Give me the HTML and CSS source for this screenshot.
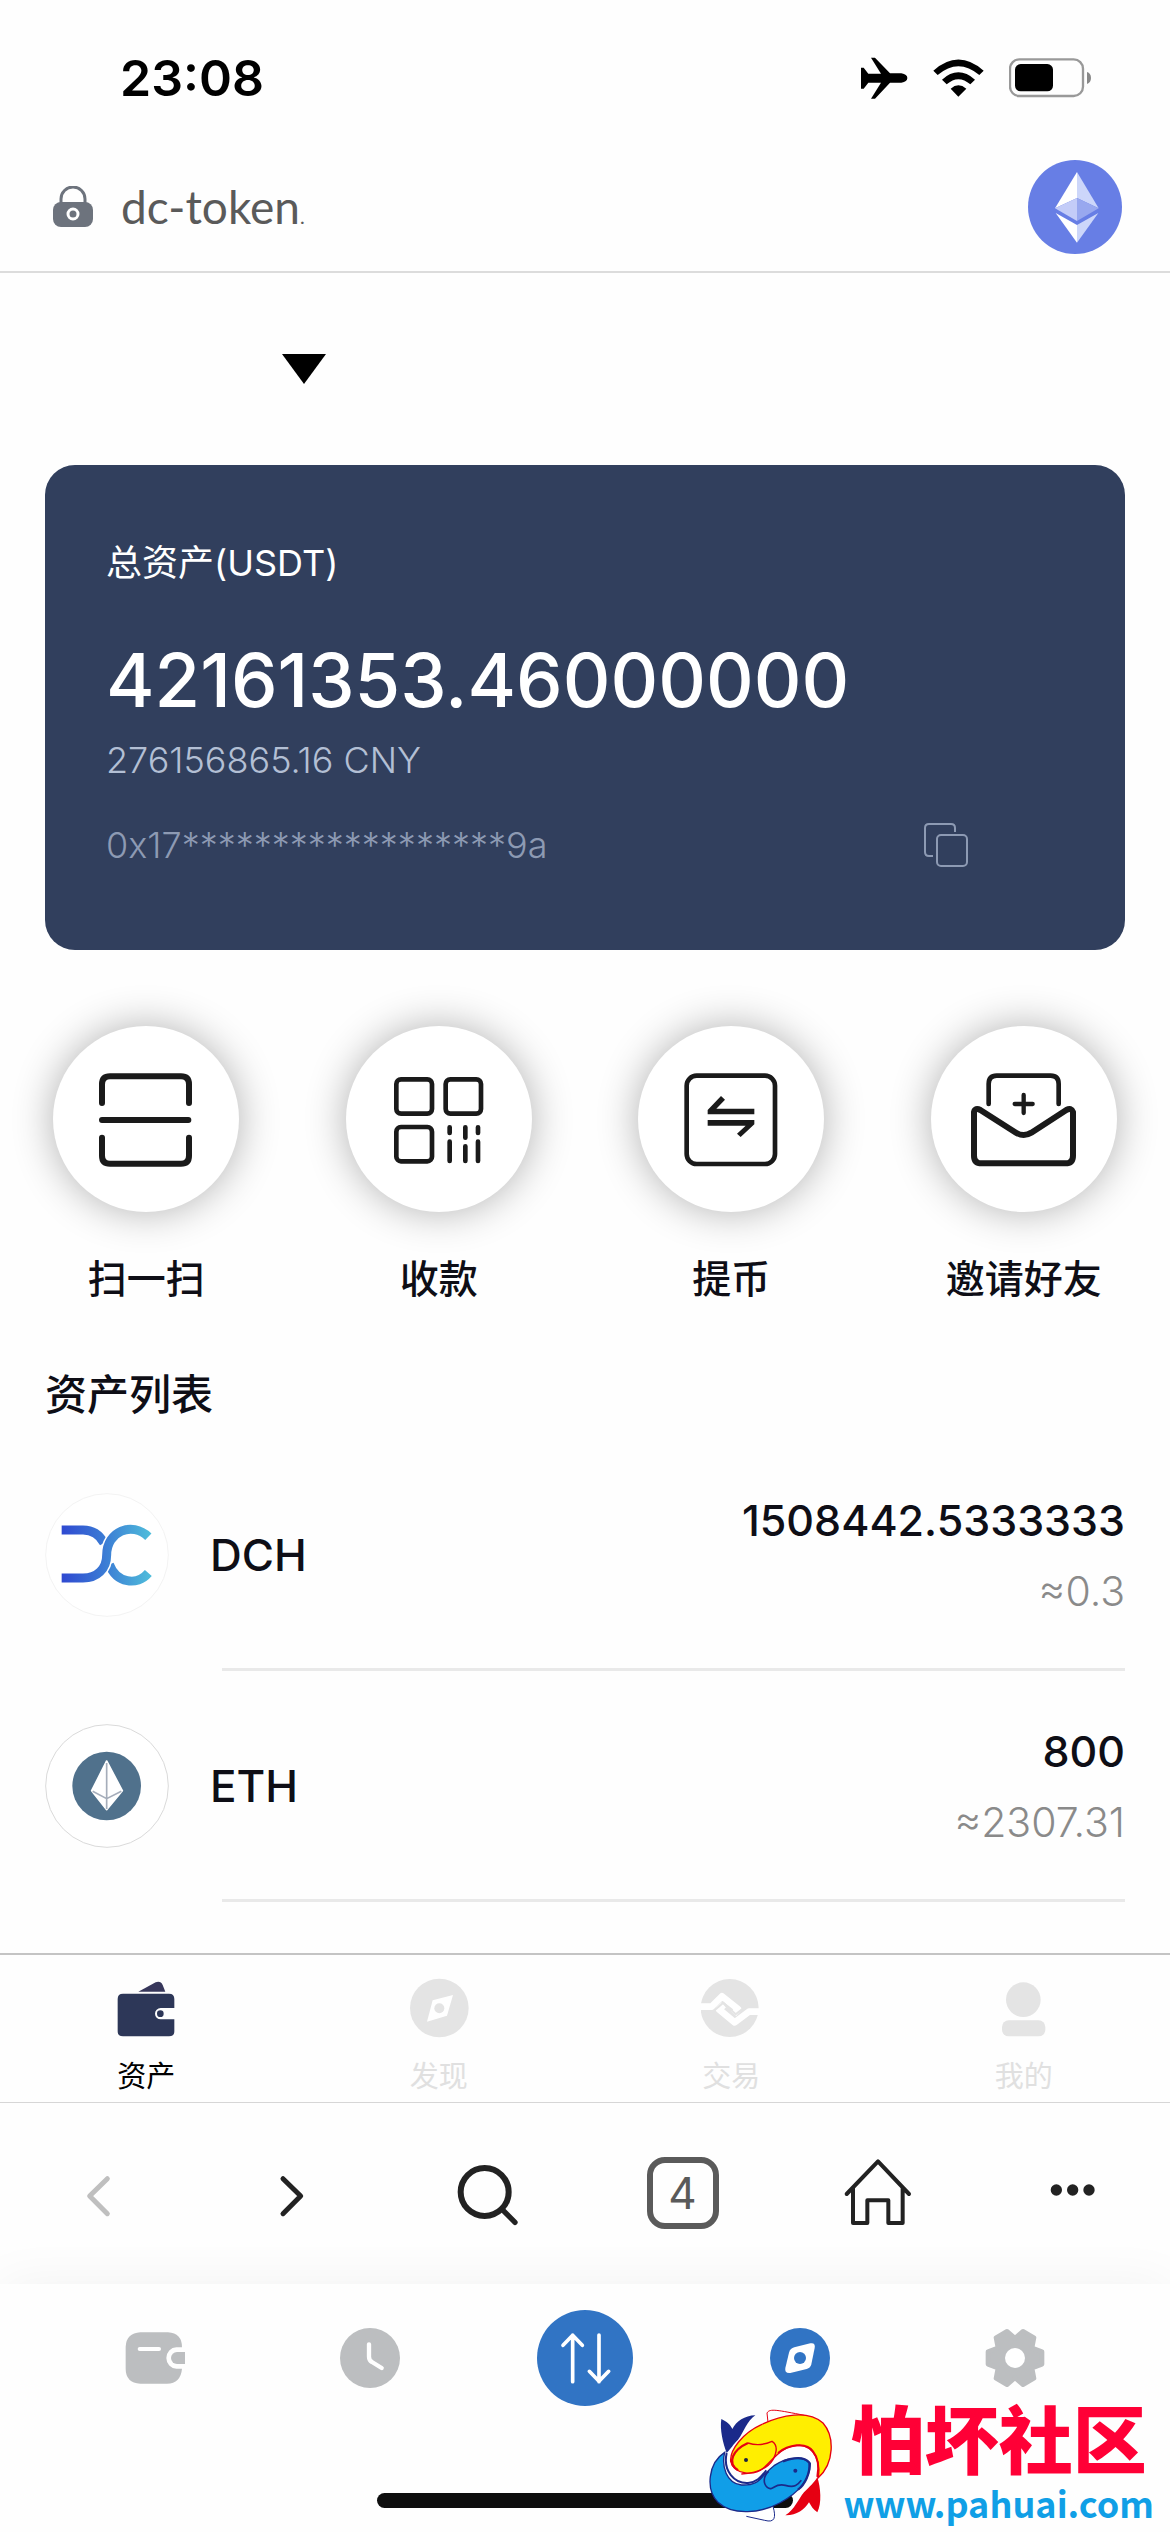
FILE: index.html
```html
<!DOCTYPE html>
<html lang="zh-CN">
<head>
<meta charset="utf-8">
<meta name="viewport" content="width=device-width, initial-scale=1">
<title>dc-token</title>
<link rel="stylesheet" href="styles.css">
</head>
<body>
<div class="phone">
  <div class="status">
    <span class="status-time">23:08</span>
    <div class="status-icons">
      <svg class="i-plane" viewBox="62 82 141 126" aria-hidden="true"><path d="M62 114h8l14 18h38L92 84h12l45 47h34q18 3 18 14t-18 14h-34l-45 48H92l30-48H84l-14 18h-8z"/></svg>
      <svg class="i-wifi" viewBox="279 85 153 114" aria-hidden="true"><path d="M280 120Q355 53 431 120L418 133Q355 80 293 133zM306 147Q355 103 405 147L391 161Q355 130 320 161zM332 174Q355 154 379 174L355 198z"/></svg>
      <svg class="i-battery" viewBox="507 83 249 120" aria-hidden="true"><rect x="510" y="87" width="219" height="110" rx="28" fill="none" stroke="#999" stroke-width="7"/><rect x="525" y="101" width="114" height="82" rx="17"/><path d="M741 125q12 4 12 18t-12 18z" fill="#888"/></svg>
    </div>
  </div>

  <header class="address">
    <svg class="i-lock" viewBox="0 0 40 42" aria-hidden="true"><path d="M8 17V13a12 12 0 0 1 24 0v4" fill="none" stroke="#6d737d" stroke-width="3"/><rect y="16" width="40" height="25" rx="8" fill="#6d737d"/><circle cx="20" cy="28" r="5" fill="none" stroke="#fff" stroke-width="3"/></svg>
    <span class="site">dc-token<small>.</small></span>
    <button class="network" aria-label="Ethereum">
      <svg viewBox="564 390 282 282" aria-hidden="true"><circle cx="705" cy="531" r="141" fill="#677ee5"/><path d="M711 426L645 535L711 504z" fill="#fff"/><path d="M711 426L776 535L711 504z" fill="#ccd6fa"/><path d="M645 535L711 504V573z" fill="#c3ccf8"/><path d="M776 535L711 504V573z" fill="#98a8ef"/><path d="M647 549L711 585V638z" fill="#fff"/><path d="M775 549L711 585V638z" fill="#ccd6fa"/></svg>
    </button>
  </header>

  <main>
    <div class="picker">
      <button aria-label="选择钱包"><svg viewBox="0 0 44 30" aria-hidden="true"><path d="M0 0H44L22 30z"/></svg></button>
    </div>

    <section class="card">
      <h2 class="card-label">总资产(USDT)</h2>
      <p class="card-total">42161353.46000000</p>
      <p class="card-fiat">276156865.16 CNY</p>
      <div class="card-address">
        <span>0x17******************9a</span>
        <button aria-label="复制"><svg viewBox="0 0 44 44" fill="none" stroke="#8d9ab3" stroke-width="2" aria-hidden="true"><path d="M9 33H5q-4 0-4-4V5q0-4 4-4h22q4 0 4 4v4"/><rect x="13" y="12" width="30" height="31" rx="4"/></svg></button>
      </div>
    </section>

    <div class="actions">
      <button><span class="disc"><svg viewBox="153 162 330 330" stroke-width="18" aria-hidden="true"><path d="M186 279V223Q186 199 210 199H423Q447 199 447 223V279M186 330H445M186 383V437Q186 461 210 461H423Q447 461 447 437V383"/></svg></span>扫一扫</button>
      <button><span class="disc"><svg viewBox="1033 162 330 330" stroke-width="14" aria-hidden="true"><rect x="1070" y="208" width="107" height="103" rx="14"/><rect x="1218" y="208" width="106" height="103" rx="14"/><rect x="1070" y="351" width="107" height="103" rx="14"/><path d="M1230 352V369M1277 352V383M1315 352V369M1230 395V453M1277 409V453M1315 395V453"/></svg></span>收款</button>
      <button><span class="disc"><svg viewBox="167 162 330 330" stroke-width="14" aria-hidden="true"><rect x="199" y="197" width="265" height="265" rx="30"/><path stroke="none" fill="#1a1a1a" d="M402 296V313H262V300L302 258L314 269L288 296zM262 330H402V343L361 381L350 371L376 347H262z"/></svg></span>提币</button>
      <button><span class="disc"><svg viewBox="1047 162 330 330" stroke-width="18" aria-hidden="true"><path stroke-width="14" d="M1106 282V222Q1106 197 1130 197H1292Q1316 197 1316 222V282"/><path stroke-width="13" d="M1184 282H1238M1211 255V309"/><path d="M1062 306Q1066 292 1081 300L1188 368Q1211 382 1234 368L1339 300Q1354 292 1359 306V437Q1359 460 1336 460H1085Q1062 460 1062 437z"/></svg></span>邀请好友</button>
    </div>

    <section class="assets">
      <h2>资产列表</h2>
      <ul>
        <li>
          <div class="asset">
            <svg class="coin" viewBox="44 40 372 372" aria-hidden="true">
              <defs><linearGradient id="dch" gradientUnits="userSpaceOnUse" x1="94" y1="230" x2="362" y2="230"><stop offset="0" stop-color="#2f49d1"/><stop offset=".45" stop-color="#3a78d4"/><stop offset="1" stop-color="#4fbddb"/></linearGradient></defs>
              <circle cx="230" cy="226" r="184" fill="#fff" stroke="#f3f3f3" stroke-width="3"/>
              <g fill="none" stroke="url(#dch)" stroke-width="27"><path d="M94 151H158Q200 151 221 190"/><path d="M237 254C258 310 320 320 354 280"/><path d="M94 295H158C200 295 229 268 229 226C229 155 305 124 354 171" stroke="#fff" stroke-width="36"/><path d="M94 295H158C200 295 229 268 229 226C229 155 305 124 354 171"/></g>
            </svg>
            <span class="asset-name">DCH</span>
            <div class="asset-value"><strong>1508442.5333333</strong><span>≈0.3</span></div>
          </div>
        </li>
        <li>
          <div class="asset">
            <svg class="coin" viewBox="44 733 372 372" aria-hidden="true"><circle cx="230" cy="919" r="184" fill="#fff" stroke="#dadada" stroke-width="3"/><circle cx="229" cy="919" r="103" fill="#50718c"/><path d="M229 844L276 933L229 990L184 933z" fill="#fff" stroke="#fff" stroke-width="5" stroke-linejoin="round"/><path d="M229 850V988M187 935L229 957L273 935" fill="none" stroke="#a5adba" stroke-width="5"/></svg>
            <span class="asset-name">ETH</span>
            <div class="asset-value"><strong>800</strong><span>≈2307.31</span></div>
          </div>
        </li>
      </ul>
    </section>
  </main>

  <nav class="tabs" aria-label="应用">
    <a href="#" class="current"><svg viewBox="106 25 180 180" aria-hidden="true"><path d="M173 66L225 38Q240 33 246 46L254 66z" fill="#37375b"/><path d="M127 72H265Q281 72 281 88V115H240a17 17 0 0 0 0 34H281V185Q281 200 265 200H127Q111 200 111 185V88Q111 72 127 72z" fill="#2d3758"/><circle cx="239" cy="132" r="10" fill="#2d3758"/></svg>资产</a>
    <a href="#"><svg viewBox="986 25 180 180" aria-hidden="true"><circle cx="1077" cy="115" r="88" fill="#e4e4e4"/><path d="M1118 76L1100 138L1040 156L1057 92z" fill="#fff"/><circle cx="1077" cy="116" r="15" fill="#e4e4e4"/></svg>发现</a>
    <a href="#"><svg viewBox="334 25 180 180" aria-hidden="true"><circle cx="420" cy="115" r="87" fill="#e4e4e4"/><g fill="none" stroke-linejoin="round"><path d="M330 111H366L397 80L445 118L432 132M512 126H478L435 158L388 119L402 106" stroke="#fff" stroke-width="20"/><path d="M372 124L401 99L438 134L458 118" stroke="#e4e4e4" stroke-width="6"/></g></svg>交易</a>
    <a href="#"><svg viewBox="1211 25 180 180" aria-hidden="true"><circle cx="1299" cy="90" r="52" fill="#e4e4e4"/><rect x="1235" y="152" width="130" height="48" rx="20" fill="#e4e4e4"/></svg>我的</a>
  </nav>

  <div class="toolbar">
    <button aria-label="后退" disabled><svg viewBox="-56 561 216 216" aria-hidden="true"><path d="M80 626L27 678L80 731" stroke="#bfbfbf" stroke-width="15"/></svg></button>
    <button aria-label="前进"><svg viewBox="529 561 216 216" aria-hidden="true"><path d="M607 626L660 678L607 731" stroke-width="15"/></svg></button>
    <button aria-label="搜索"><svg viewBox="1114 561 216 216" aria-hidden="true"><circle cx="1212" cy="666" r="72" stroke-width="18"/><path d="M1268 722L1303 757" stroke-width="16"/></svg></button>
    <button aria-label="标签页"><span class="tab-count">4</span></button>
    <button aria-label="主页"><svg viewBox="754 561 216 216" stroke-width="12" aria-hidden="true"><path d="M768 672L862 574L955 672M787 655V759H830V691H893V759H936V655"/></svg></button>
    <button aria-label="更多"><svg viewBox="1339 561 216 216" aria-hidden="true"><g fill="#222" stroke="none"><circle cx="1397" cy="660" r="17"/><circle cx="1446" cy="660" r="17"/><circle cx="1495" cy="660" r="17"/></g></svg></button>
  </div>

  <nav class="dock" aria-label="钱包">
    <a href="#" aria-label="钱包"><svg viewBox="136 1074 180 180" aria-hidden="true"><path d="M182 1087H265Q307 1090 307 1132H290a30 32 0 0 0 0 64H307Q303 1240 262 1241H182Q138 1238 138 1196V1130Q140 1090 182 1087z" fill="#bcbec0"/><path d="M180 1137H238" stroke="#fff" stroke-width="12" stroke-linecap="round"/><path d="M292 1146H316V1182H292a18 18 0 0 1 0-36z" fill="#bcbec0"/></svg></a>
    <a href="#" aria-label="记录"><svg viewBox="780 1074 180 180" aria-hidden="true"><circle cx="870" cy="1164" r="90" fill="#bcbec0"/><path d="M867 1123V1160Q867 1171 876 1176L905 1194" fill="none" stroke="#fff" stroke-width="13" stroke-linecap="round"/></svg></a>
    <a href="#" aria-label="兑换"><svg class="swap" viewBox="1371 1020 288 288" aria-hidden="true"><circle cx="1515" cy="1164" r="144" fill="#3174c4"/><path d="M1478 1235V1095M1449 1126L1478 1096L1507 1126M1557 1095V1235M1528 1204L1557 1234L1586 1204" fill="none" stroke="#fff" stroke-width="11" stroke-linecap="round" stroke-linejoin="round"/></svg></a>
    <a href="#" aria-label="浏览器"><svg viewBox="537 1074 180 180" aria-hidden="true"><circle cx="627" cy="1164" r="90" fill="#3174c4"/><path d="M610 1132L658 1120Q674 1117 671 1134L661 1183Q658 1194 647 1197L598 1209Q580 1211 583 1194L594 1148Q598 1135 610 1132z" fill="#fff"/><circle cx="627" cy="1164" r="18" fill="#3174c4"/></svg></a>
    <a href="#" aria-label="设置"><svg viewBox="-90 -90 180 180" aria-hidden="true"><path d="M81-19V19L51 30L57 61L24 80L0 59L-24 80L-57 61L-51 30L-81 19V-19L-51-30L-57-61L-24-80L0-59L24-80L57-61L51-30z" fill="#bcbec0" stroke="#bcbec0" stroke-width="14" stroke-linejoin="round"/><circle r="30" fill="#fff"/></svg></a>
  </nav>
  <div class="home-bar"></div>

  <div class="watermark">
    <svg viewBox="30 42 375 348" fill="none" stroke-width="4" aria-hidden="true">
      <path d="M210 88L207 60C215 45 240 52 320 67" fill="#fff" stroke="#e60012" stroke-width="3"/>
      <path d="M225 340C235 375 230 390 200 382L145 370" fill="#fff" stroke="#1b2a8a" stroke-width="3"/>
      <path d="M80 178C30 210 22 290 60 328C105 370 190 360 245 330C300 300 335 260 337 212C315 185 262 195 228 218C185 250 190 278 130 276C85 270 70 220 80 178z" fill="#109ee8" stroke="#1b2a8a"/>
      <path d="M70 78C85 85 98 95 103 108C115 85 140 68 172 67C145 85 140 115 120 140C105 155 100 165 86 180C75 150 65 110 70 78z" fill="#1b2a8a"/>
      <path d="M86 180C74 235 110 272 150 270C178 268 190 250 205 232" stroke="#1b2a8a" stroke-width="6"/>
      <path d="M212 235C195 250 195 272 208 283C225 297 228 268 262 277C290 286 300 275 310 262" stroke="#1b2a8a" stroke-width="5"/>
      <path d="M255 205C290 192 318 190 334 209C338 240 320 275 300 290" stroke="#1b2a8a" stroke-width="7"/>
      <path d="M360 255C410 210 410 130 375 90C330 50 250 65 190 95C135 120 95 170 98 205C105 240 165 255 200 222C235 190 250 160 305 157C350 160 370 210 360 255z" fill="#ffee00" stroke="#e60012"/>
      <path d="M358 252C368 285 372 330 358 358C345 350 340 340 333 328C320 350 295 368 262 367C290 350 300 320 318 298C335 280 350 268 358 252z" fill="#e60012"/>
      <path d="M150 150C175 158 200 155 222 145C238 155 238 175 225 200C210 225 180 240 130 243" stroke="#e60012"/>
      <path d="M150 150C105 170 85 210 120 232" stroke="#e60012" stroke-width="7"/>
      <path d="M240 180C270 155 325 145 345 175C365 200 362 230 358 252" stroke="#e60012" stroke-width="6"/>
      <circle cx="144" cy="201" r="6" fill="#1c2340"/><circle cx="292" cy="233" r="6" fill="#1b2a8a"/>
    </svg>
    <div class="watermark-text"><b>怕坏社区</b><span>www.pahuai.com</span></div>
  </div>
</div>
</body>
</html>
```
FILE: styles.css
```css
* { box-sizing: border-box; }

body {
  margin: 0;
  background: #fefefe;
  color: #0e0e16;
  font-family: Inter, "Noto Sans CJK SC", sans-serif;
}

h2, p, ul { margin: 0; padding: 0; }
ul { list-style: none; }
svg { display: block; }
button { padding: 0; border: 0; background: none; color: inherit; font: inherit; }
a { color: inherit; text-decoration: none; }

.phone {
  position: relative;
  display: flex;
  flex-direction: column;
  min-height: 100vh;
}

/* status bar */
.status {
  display: flex;
  align-items: center;
  justify-content: space-between;
  padding: 46px 78px 30px 120px;
  color: #000;
}
.status-time { font-size: 50px; line-height: 64px; font-weight: 600; }
.status-icons { display: flex; align-items: center; gap: 25px; }
.i-plane { width: 47px; height: 42px; }
.i-wifi { width: 51px; height: 38px; }
.i-battery { width: 83px; height: 40px; }

/* address bar */
.address {
  display: flex;
  align-items: center;
  padding: 20px 48px 17px 53px;
  border-bottom: 2px solid #dcdcdc;
}
.i-lock { width: 40px; height: 42px; }
.site {
  flex: 1;
  margin-left: 28px;
  padding-top: 8px;
  color: #5a5a5a;
  font-family: Lato, sans-serif;
  font-size: 46px;
  line-height: 56px;
}
.site small { font-size: 20px; }
.network svg { width: 94px; height: 94px; }

.picker { display: flex; padding: 81px 282px; }
.picker svg { width: 44px; height: 30px; }

/* balance card */
.card {
  margin: 0 45px;
  padding: 76px 61px 83px;
  border-radius: 30px;
  background: #313f5d;
  color: #fff;
}
.card-label { font-size: 36px; line-height: 44px; font-weight: 400; }
.card-total { margin-top: 47px; font-size: 74px; line-height: 96px; font-weight: 500; }
.card-fiat { margin-top: 10px; color: #b3bfd4; font-size: 36px; line-height: 44px; font-weight: 300; }
.card-address {
  display: flex;
  justify-content: space-between;
  margin-top: 41px;
  padding-right: 96px;
  color: #8d9ab3;
  font-size: 36px;
  line-height: 44px;
  font-weight: 300;
}
.card-address svg { width: 44px; height: 44px; }

/* shortcuts */
.actions { display: grid; grid-template-columns: repeat(4, 1fr); padding-top: 76px; }
.actions button {
  display: flex;
  flex-direction: column;
  align-items: center;
  gap: 41px;
  font-size: 39px;
  line-height: 52px;
  font-weight: 500;
}
.disc {
  display: grid;
  place-items: center;
  width: 186px;
  height: 186px;
  border-radius: 50%;
  background: #fff;
  box-shadow: 0 0 40px rgba(0, 0, 0, .31);
}
.disc svg { width: 110px; height: 110px; fill: none; stroke: #1a1a1a; stroke-linecap: round; stroke-linejoin: round; }

/* asset list */
.assets { padding: 62px 45px 51px; }
.assets h2 { margin-bottom: 17px; font-size: 42px; line-height: 56px; font-weight: 500; }
.assets li::after { content: ""; display: block; height: 3px; margin-left: 177px; background: #e9e9e9; }
.asset { display: flex; align-items: center; padding: 53px 0 51px; }
.coin { width: 124px; height: 124px; }
.asset-name { flex: 1; margin-left: 41px; font-size: 44px; line-height: 56px; font-weight: 500; }
.asset-value { display: flex; flex-direction: column; align-items: flex-end; gap: 18px; }
.asset-value strong { font-size: 43px; line-height: 54px; font-weight: 500; }
.asset-value span { color: #8a8a8a; font-size: 41px; line-height: 52px; font-weight: 300; }

/* site tabs */
.tabs {
  display: grid;
  grid-template-columns: repeat(4, 1fr);
  margin-top: auto;
  padding: 23px 0 7px;
  border-top: 2px solid #c4c4c4;
  border-bottom: 1px solid #d6d6d6;
  color: #e0e0e0;
  font-size: 29px;
  line-height: 36px;
  font-weight: 400;
}
.tabs a { display: flex; flex-direction: column; align-items: center; gap: 21px; }
.tabs .current { color: #000; }
.tabs svg { width: 60px; height: 60px; }

/* browser toolbar */
.toolbar { display: grid; grid-template-columns: repeat(6, 1fr); padding: 54px 0 55px; }
.toolbar button { display: grid; place-items: center; }
.toolbar svg { width: 72px; height: 72px; fill: none; stroke: #222; stroke-linecap: round; stroke-linejoin: round; }
.tab-count {
  width: 72px;
  height: 72px;
  border: 6px solid #5a5a5a;
  border-radius: 18px;
  color: #5a5a5a;
  font-size: 44px;
  line-height: 60px;
}

/* wallet dock */
.dock {
  display: grid;
  grid-template-columns: repeat(5, 1fr);
  align-items: center;
  justify-items: center;
  padding: 26px 48px 87px;
  background: #fefefe;
  box-shadow: 0 0 50px rgba(0, 0, 0, .05);
  clip-path: inset(-60px 0 0 0);
}
.dock svg { width: 60px; height: 60px; }
.dock .swap { width: 96px; height: 96px; }
.home-bar { width: 416px; height: 15px; margin: 0 auto 24px; border-radius: 8px; background: #0e0e0e; }

/* corner stamp over the page */
.watermark { position: absolute; right: 16px; bottom: 6px; display: flex; align-items: center; gap: 10px; }
.watermark > svg { width: 125px; height: 116px; }
.watermark-text { display: flex; flex-direction: column; align-items: center; }
.watermark b { color: #ff0036; font-size: 74px; line-height: 74px; font-weight: 900; }
.watermark span { color: #109fe6; font-family: "Noto Sans CJK SC", sans-serif; font-size: 36px; line-height: 48px; font-weight: 700; }
```
